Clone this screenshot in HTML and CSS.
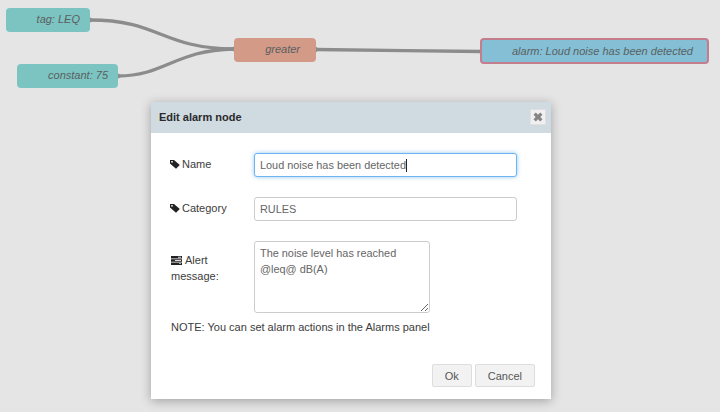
FILE: index.html
```html
<!DOCTYPE html>
<html lang="en">
<head>
    <meta charset="UTF-8">
    <title>Edit alarm node</title>
    <link rel="stylesheet" href="styles.css">
</head>
<body>
    <!-- Flow canvas -->
    <div class="canvas">
        <svg class="wires" width="720" height="100" viewBox="0 0 720 100">
            <path d="M90 20 C160 20 160 48 234 49"/>
            <path d="M118 76 C165 76 175 50 234 49"/>
            <path d="M316 49.500 C380 50 420 51 481 51.500"/>
            <path class="port" d="M89 16.500 L93.500 20 L89 23.500 Z"/>
            <path class="port" d="M117 72.500 L121.500 76 L117 79.500 Z"/>
            <path class="port" d="M235 45.500 L230.500 49 L235 52.500 Z"/>
            <path class="port" d="M315 46 L319.500 49.500 L315 53 Z"/>
            <path class="port" d="M482 48 L477.500 51.500 L482 55 Z"/>
        </svg>

        <div class="node node-tag">tag: LEQ</div>
        <div class="node node-constant">constant: 75</div>
        <div class="node node-greater">greater</div>
        <div class="node node-alarm">alarm: Loud noise has been detected</div>
    </div>

    <!-- Edit dialog -->
    <div class="dialog">
        <div class="dialog-header">
            <span class="dialog-title">Edit alarm node</span>
            <button class="close-btn" type="button">
                <svg width="10" height="10" viewBox="0 0 10 10"><path d="M0.500 2.800 L2.800 0.500 L5 2.700 L7.200 0.500 L9.500 2.800 L7.300 5 L9.500 7.200 L7.200 9.500 L5 7.300 L2.800 9.500 L0.500 7.200 L2.700 5 Z"/></svg>
            </button>
        </div>

        <div class="dialog-body">
            <div class="form-row row-name">
                <label class="form-label">
                    <svg class="tag-icon" width="10" height="10" viewBox="0 0 10 10"><path d="M0 1 L4 1 L9.800 6 L6 9.800 L0 4.500 Z M2 2 A0.800 0.800 0 1 0 2.010 2 Z" fill-rule="evenodd"/></svg>Name
                </label>
                <div class="fake-input fake-input-focus">Loud noise has been detected<span class="caret"></span></div>
            </div>

            <div class="form-row row-category">
                <label class="form-label">
                    <svg class="tag-icon" width="10" height="10" viewBox="0 0 10 10"><path d="M0 1 L4 1 L9.800 6 L6 9.800 L0 4.500 Z M2 2 A0.800 0.800 0 1 0 2.010 2 Z" fill-rule="evenodd"/></svg>Category
                </label>
                <input class="text-input" type="text" value="RULES">
            </div>

            <div class="form-row row-message">
                <label class="form-label label-message">
                    <svg class="tasks-icon" width="11" height="9" viewBox="0 0 11 9"><path d="M0 0 H11 V2.500 H0 Z M0 3.200 H11 V5.700 H0 Z M0 6.400 H11 V8.900 H0 Z"/><path class="tasks-gap" d="M7 0.800 H10 V1.700 H7 Z M4 4 H10 V4.900 H4 Z M8 7.200 H10 V8.100 H8 Z"/></svg>Alert message:
                </label>
                <textarea class="text-area">The noise level has reached
@leq@ dB(A)</textarea>
            </div>

            <p class="note">NOTE: You can set alarm actions in the Alarms panel</p>
        </div>

        <div class="dialog-footer">
            <button class="btn" type="button">Ok</button>
            <button class="btn" type="button">Cancel</button>
        </div>
    </div>
</body>
</html>
```

FILE: styles.css
```css
* {
    margin: 0;
    padding: 0;
    box-sizing: border-box;
    font-family: 'Liberation Sans', Arial, sans-serif;
}

body {
    background: #e5e5e5;
    width: 720px;
    height: 412px;
    overflow: hidden;
    position: relative;
}

.canvas {
    position: absolute;
    inset: 0;
}

.wires {
    position: absolute;
    left: 0;
    top: 0;
}

.wires path {
    fill: none;
    stroke: #8c8c8c;
    stroke-width: 3.300;
}

.wires .port {
    fill: #8c8c8c;
    stroke: none;
}

/* Flow nodes */
.node {
    position: absolute;
    height: 24px;
    line-height: 23px;
    border-radius: 4px;
    font-size: 11px;
    font-style: italic;
    color: #5a5f60;
    text-align: right;
}

.node-tag {
    left: 6px;
    top: 8px;
    width: 84px;
    padding-right: 10px;
    background: #7cc4c2;
}

.node-constant {
    left: 17px;
    top: 64px;
    width: 101px;
    padding-right: 10px;
    background: #7cc4c2;
}

.node-greater {
    left: 234px;
    top: 38px;
    width: 82px;
    padding-right: 16px;
    background: #d39a88;
}

.node-alarm {
    left: 480px;
    top: 38px;
    width: 229px;
    height: 26px;
    line-height: 23px;
    padding-right: 14px;
    background: #84bfd6;
    border: 2px solid #c47d8c;
}

/* Dialog */
.dialog {
    position: absolute;
    left: 151px;
    top: 102px;
    width: 400px;
    height: 297px;
    background: #fff;
    box-shadow: 0 2px 10px rgba(0, 0, 0, 0.3);
    display: flex;
    flex-direction: column;
}

.dialog-header {
    height: 31px;
    background: #cfdae1;
    display: flex;
    align-items: center;
    justify-content: space-between;
    padding: 0 5px 1px 8px;
}

.dialog-title {
    font-size: 11px;
    font-weight: bold;
    color: #2b2b2b;
}

.close-btn {
    width: 16px;
    height: 16px;
    background: #f0f0f0;
    border: 1px solid #e0e0e0;
    display: flex;
    align-items: center;
    justify-content: center;
}

.close-btn path {
    fill: #858585;
}

.dialog-body {
    flex: 1;
    padding: 20px 20px 0 20px;
}

.form-row {
    display: flex;
    align-items: flex-start;
}

.row-name {
    height: 44px;
}

.row-category {
    height: 44px;
}

.row-message {
    height: 72px;
}

.form-label {
    width: 83px;
    font-size: 11px;
    color: #3c3c3c;
    line-height: 16px;
    padding-top: 3px;
}

.tag-icon {
    fill: #222;
    vertical-align: -1px;
    margin: 0 2px 0 -1px;
}

.tasks-icon {
    fill: #222;
    vertical-align: -1px;
    margin-right: 3px;
}

.tasks-icon .tasks-gap {
    fill: #ddd;
}

.label-message {
    padding-top: 11px;
    padding-right: 20px;
}

.fake-input,
.text-input {
    width: 263px;
    height: 24px;
    border: 1px solid #ccc;
    border-radius: 3px;
    font-size: 10.900px;
    color: #666;
    padding: 0 5px;
    line-height: 23px;
    background: #fff;
}

.fake-input-focus {
    border-color: #6cb4f2;
    box-shadow: 0 0 4px rgba(102, 175, 233, 0.7);
}

.caret {
    display: inline-block;
    width: 1px;
    height: 13px;
    background: #222;
    vertical-align: -3px;
}

.text-area {
    display: block;
    width: 176px;
    height: 72px;
    border: 1px solid #ccc;
    border-radius: 3px;
    font-size: 10.900px;
    line-height: 16px;
    color: #666;
    padding: 3px 5px;
}

.note {
    margin-top: 6px;
    font-size: 11px;
    line-height: 16px;
    color: #3c3c3c;
}

.dialog-footer {
    display: flex;
    justify-content: flex-end;
    gap: 3px;
    padding: 0 16px 12px 0;
}

.btn {
    height: 23px;
    padding: 0 12px;
    background: #f2f2f2;
    border: 1px solid #ddd;
    border-radius: 2px;
    font-size: 11px;
    color: #555;
}
```
